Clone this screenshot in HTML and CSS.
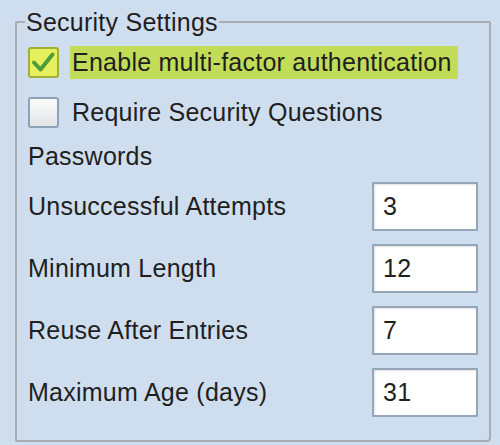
FILE: index.html
```html
<!DOCTYPE html>
<html>
<head>
<meta charset="utf-8">
<link rel="stylesheet" href="styles.css">
</head>
<body>
<fieldset class="panel">
  <legend class="panel-title">Security Settings</legend>
  <div class="check-row first">
    <span class="box checked">
      <svg width="27" height="27" viewBox="0 0 27 27"><path d="M4 13.5 L10.5 20.5 L22.5 5.5" fill="none" stroke="#4e9c3a" stroke-width="4" stroke-linecap="round" stroke-linejoin="round"/></svg>
    </span>
    <span class="check-label focus">Enable multi-factor authentication</span>
  </div>
  <div class="check-row second">
    <span class="box"></span>
    <span class="check-label">Require Security Questions</span>
  </div>
  <div class="section">Passwords</div>
  <div class="field-row first-field">
    <span class="field-label">Unsuccessful Attempts</span>
    <input class="num" type="text" value="3">
  </div>
  <div class="field-row">
    <span class="field-label">Minimum Length</span>
    <input class="num" type="text" value="12">
  </div>
  <div class="field-row">
    <span class="field-label">Reuse After Entries</span>
    <input class="num" type="text" value="7">
  </div>
  <div class="field-row">
    <span class="field-label">Maximum Age (days)</span>
    <input class="num" type="text" value="31">
  </div>
</fieldset>
</body>
</html>
```

FILE: styles.css
```css
html, body {
  margin: 0;
  padding: 0;
  background: #cfdeee;
  height: 445px;
  overflow: hidden;
}
body {
  font-family: "Liberation Sans", Arial, sans-serif;
  font-size: 25px;
  letter-spacing: 0.25px;
  color: #1f1f1f;
}
.panel {
  box-sizing: border-box;
  margin: 8px 0 0 15px;
  width: 476px;
  height: 434px;
  border: 2px solid #a9adb2;
  border-radius: 2px 2px 4px 2px;
  padding: 0 11px 0 11px;
  display: flex;
  flex-direction: column;
}
.panel-title {
  font-size: 25px;
  line-height: 28px;
  padding: 0 1px;
  margin-left: -3px;
}
.check-row {
  display: flex;
  align-items: center;
  height: 33px;
}
.check-row.first { margin-top: 10px; }
.check-row.second { margin-top: 17px; }
.box {
  box-sizing: border-box;
  width: 31px;
  height: 31px;
  border: 2px solid #8ea2b7;
  border-radius: 3px;
  background: linear-gradient(#fbfbfb, #e2e4e6);
  display: flex;
  align-items: center;
  justify-content: center;
  flex: none;
}
.box.checked {
  border-color: #a2ae3a;
  background: #e6f05c;
}
.check-label {
  margin-left: 11px;
  line-height: 33px;
  padding: 0 6px 0 2px;
}
.check-label.focus {
  background: #c2dc58;
}
.section {
  margin-top: 11px;
  line-height: 33px;
}
.field-row {
  display: flex;
  align-items: center;
  justify-content: space-between;
  height: 49px;
  margin-top: 13px;
}
.field-row.first-field { margin-top: 9px; }
.num {
  box-sizing: border-box;
  width: 106px;
  height: 49px;
  margin: 0;
  border: 2px solid #95a6b8;
  border-radius: 1px;
  background: #fff;
  box-shadow: inset 1px 1px 2px rgba(0,0,0,0.12);
  padding: 0 0 0 9px;
  font-family: "Liberation Sans", Arial, sans-serif;
  font-size: 25px;
  letter-spacing: 0.25px;
  color: #1f1f1f;
  outline: none;
}
```
